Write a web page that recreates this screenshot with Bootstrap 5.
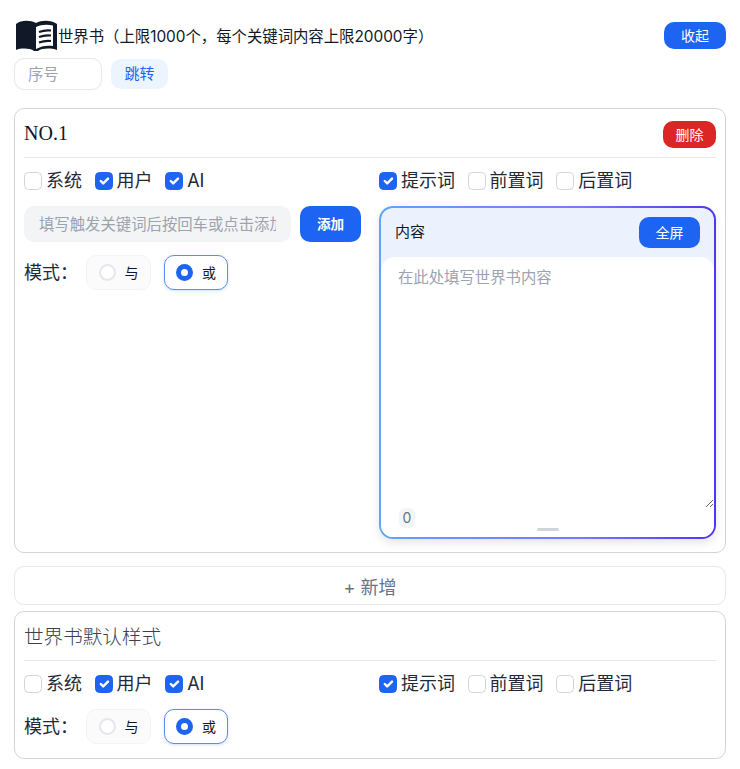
<!DOCTYPE html>
<html lang="zh"><head><meta charset="utf-8">
<link href="https://cdn.jsdelivr.net/npm/bootstrap@5.3.0/dist/css/bootstrap.min.css" rel="stylesheet">
<style>
body{font-family:Inter,"Noto Sans CJK SC",sans-serif;color:#111827;background:#fff;padding:20px 14px 0;font-size:14px}
.top-row{height:32px}
.book{width:44px;height:34px;flex:none}
.title-txt{font-size:15.36px;color:#111827;padding-top:1px}
.btn-blue{background:#1d64f2;border:0;color:#fff;font-size:14px;border-radius:10px;padding:0}
.btn-fold{width:62px;height:27px;margin-top:-1px}
.jump-row{margin-top:6px;gap:9px}
.seq{width:88px;height:32px;border:1px solid #e5e7eb;border-radius:10px;font-size:15.36px;padding:0 13px;color:#111827;background:#fff}
.seq::placeholder,.kw::placeholder{color:#9ca3af}
.btn-jump{background:#ebf4ff;color:#1d64f2;border:0;width:57px;height:30px;border-radius:10px;font-size:15px;padding:0}
.wb-card{border:1px solid #d1d5db;border-radius:10px;background:#fff;padding:0 9px}
.wb-a{margin-top:18px;height:445px}
.wb-head{height:49px;border-bottom:1px solid #e5e7eb}
.no-t{font-family:"Liberation Serif",serif;font-size:20px;color:#111827}
.def-t{font-family:"Noto Sans CJK SC",serif;font-size:19.6px;font-weight:300;color:#374151}
.btn-del{background:#dc2626;border:0;color:#fff;font-size:14px;border-radius:10px;width:53px;height:27px;padding:0;margin-top:2px}
.chk-row{font-size:18px;color:#1f2937;line-height:27px;margin-top:9px;gap:12.6px}
.chk-item{display:flex;align-items:center;gap:4px;margin:0}
.box{width:18px;height:18px;border-radius:5px;margin:0;border:1px solid #d1d5db;flex:none;float:none;margin-top:0}
.form-check-input.box:checked{background-color:#1d64f2;border-color:#1d64f2}
.col-l{width:337px;flex:none}
.col-r{width:337px;flex:none;margin-left:18px}
.add-row{margin-top:12px}
.kw{flex:1;min-width:0;height:36px;background:#f3f4f6;border:0;border-radius:10px;padding:0 15px;font-size:15.36px}
.btn-add{width:61px;height:36px;font-weight:700;font-size:13.6px;margin-left:9px}
.mode-row{font-size:18px;color:#1f2937;margin-top:13px}
.wb-b .mode-row{margin-top:12px}
.mode-lbl{width:62px}
.rad{height:35px;border:1px solid #f3f4f6;background:#fbfbfc;border-radius:10px;width:65px;margin:0;font-size:14px;color:#111827;display:flex;align-items:center;justify-content:center;gap:9px}
.rad-on{border-color:#5a8dee;background:#fff;margin-left:13px;width:64px;box-shadow:0 1px 3px rgba(59,130,246,.25)}
.dot{width:17px;height:17px;border-radius:50%;border:2px solid #e5e7eb;background:#fff;flex:none}
.dot-on{border:5px solid #1d64f2}
.ed-wrap{margin-top:12px;height:333px;border-radius:14px;padding:2px;background:linear-gradient(90deg,#60a5fa,#7a78f8 60%,#4f36f0);box-shadow:0 4px 10px rgba(0,0,0,.1);position:relative}
.ed-in{height:100%;border-radius:12px;background:#ecf2fd;overflow:hidden;display:flex;flex-direction:column}
.ed-head{height:49px;padding:0 14px;font-size:15px;flex:none}
.btn-full{width:61px;height:31px;font-size:14px}
.ed-ta{flex:1;border:0;outline:0;border-radius:14px 14px 0 0;padding:9px 17px;font-size:15.36px;resize:vertical;background:#fff;width:100%;display:block;min-height:0}
.ed-ta::placeholder{color:#9ca3af}
.ed-foot{height:29px;background:#fff;flex:none}
.cnt{position:absolute;left:20px;bottom:11px;background:#f3f4f6;color:#6b7280;font-size:14px;border-radius:6px;width:16px;text-align:center;line-height:20px}
.grip{position:absolute;left:50%;margin-left:-11px;bottom:8px;width:22px;height:3px;border-radius:2px;background:#d1d5db}
.btn-new{display:block;width:100%;height:39px;margin-top:13px;border:1px solid #e5e7eb;border-radius:10px;background:#fff;color:#6b7280;font-size:18px;padding:3px 0 0}
.wb-b{margin-top:6px;height:148px}
</style></head><body>
<div class="d-flex align-items-center justify-content-between top-row">
<div class="d-flex align-items-center">
<svg class="book" viewBox="0 0 44 34"><path fill="#111827" d="M2 5C7 1 16 1 22 4C28 1 37 1 43 5V31C37 29 28 29 24 32H20C16 29 7 29 2 31Z"/><path fill="#fff" d="M22 8C27 5.500 33 5 39 6.500V27C33 26 27 27 22 30Z"/><path stroke="#111827" stroke-width="2.200" fill="none" d="M25 13C29 11.500 33 11 37 11.500M25 18C29 16.500 33 16 37 16.500M25 23.500C29 22 33 21.500 37 22"/></svg>
<span class="title-txt">世界书（上限1000个，每个关键词内容上限20000字）</span>
</div>
<button class="btn btn-blue btn-fold">收起</button>
</div>
<div class="d-flex align-items-center jump-row">
<input class="seq" placeholder="序号"><button class="btn btn-jump">跳转</button>
</div>

<div class="wb-card wb-a">
<div class="d-flex align-items-center justify-content-between wb-head"><span class="no-t">NO.1</span><button class="btn btn-del">删除</button></div>
<div class="d-flex">
<div class="col-l">
<div class="d-flex chk-row"><label class="chk-item"><input type="checkbox" class="form-check-input box">系统</label><label class="chk-item"><input type="checkbox" class="form-check-input box" checked>用户</label><label class="chk-item"><input type="checkbox" class="form-check-input box" checked>AI</label></div>
<div class="d-flex align-items-center add-row"><input class="kw" placeholder="填写触发关键词后按回车或点击添加"><button class="btn btn-blue btn-add">添加</button></div>
<div class="d-flex align-items-center mode-row"><span class="mode-lbl">模式：</span><label class="rad"><span class="dot"></span>与</label><label class="rad rad-on"><span class="dot dot-on"></span>或</label></div>
</div>
<div class="col-r">
<div class="d-flex chk-row"><label class="chk-item"><input type="checkbox" class="form-check-input box" checked>提示词</label><label class="chk-item"><input type="checkbox" class="form-check-input box">前置词</label><label class="chk-item"><input type="checkbox" class="form-check-input box">后置词</label></div>
<div class="ed-wrap"><div class="ed-in"><div class="d-flex align-items-center justify-content-between ed-head"><span>内容</span><button class="btn btn-blue btn-full">全屏</button></div><textarea class="ed-ta" placeholder="在此处填写世界书内容"></textarea><div class="ed-foot"></div></div><span class="cnt">0</span><span class="grip"></span></div>
</div>
</div>
</div>

<button class="btn btn-new">+ 新增</button>

<div class="wb-card wb-b">
<div class="d-flex align-items-center wb-head"><span class="def-t">世界书默认样式</span></div>
<div class="d-flex">
<div class="col-l">
<div class="d-flex chk-row"><label class="chk-item"><input type="checkbox" class="form-check-input box">系统</label><label class="chk-item"><input type="checkbox" class="form-check-input box" checked>用户</label><label class="chk-item"><input type="checkbox" class="form-check-input box" checked>AI</label></div>
<div class="d-flex align-items-center mode-row"><span class="mode-lbl">模式：</span><label class="rad"><span class="dot"></span>与</label><label class="rad rad-on"><span class="dot dot-on"></span>或</label></div>
</div>
<div class="col-r">
<div class="d-flex chk-row"><label class="chk-item"><input type="checkbox" class="form-check-input box" checked>提示词</label><label class="chk-item"><input type="checkbox" class="form-check-input box">前置词</label><label class="chk-item"><input type="checkbox" class="form-check-input box">后置词</label></div>
</div>
</div>
</div>
</body></html>
